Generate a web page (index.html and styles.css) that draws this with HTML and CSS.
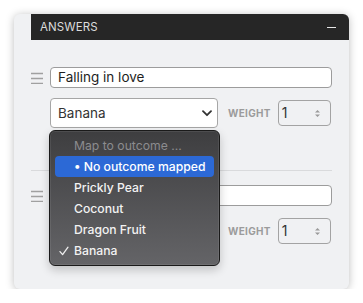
FILE: index.html
```html
<!DOCTYPE html>
<html>
<head>
<meta charset="utf-8">
<link rel="stylesheet" href="styles.css">
</head>
<body>
<div class="card">
  <div class="header">
    <span class="title">ANSWERS</span>
    <span class="collapse"></span>
  </div>
  <div class="body">
    <div class="answer">
      <div class="line">
        <svg class="handle" width="12" height="12" viewBox="0 0 12 12"><path d="M0 1.5H12M0 6.5H12M0 11.5H12" stroke="#a0a0a0" stroke-width="1.3"/></svg>
        <div class="text-input">Falling in love</div>
      </div>
      <div class="line sub">
        <div class="select-wrap">
          <div class="select">Banana</div>
          <svg class="chev" width="10" height="7" viewBox="0 0 10 7"><path d="M1 1.2L5 5.2L9 1.2" fill="none" stroke="#333" stroke-width="1.8" stroke-linecap="round" stroke-linejoin="round"/></svg>
          <div class="menu">
            <div class="item muted">Map to outcome ...</div>
            <div class="item active">• No outcome mapped</div>
            <div class="item">Prickly Pear</div>
            <div class="item">Coconut</div>
            <div class="item">Dragon Fruit</div>
            <div class="item checked"><svg class="check" width="10" height="10" viewBox="0 0 10 10"><path d="M1 5.6L3.6 8.6L9 1.2" fill="none" stroke="#eee" stroke-width="1.3" stroke-linecap="round" stroke-linejoin="round"/></svg>Banana</div>
          </div>
        </div>
        <span class="weight-label">WEIGHT</span>
        <div class="number">1<svg class="spin" width="7" height="9" viewBox="0 0 7 9"><path d="M1 3.5L3.5 1L6 3.5Z M1 5.5L3.5 8L6 5.5Z" fill="#9a9a9a"/></svg></div>
      </div>
    </div>
    <div class="answer second">
      <div class="line">
        <svg class="handle" width="12" height="12" viewBox="0 0 12 12"><path d="M0 1.5H12M0 6.5H12M0 11.5H12" stroke="#a0a0a0" stroke-width="1.3"/></svg>
        <div class="text-input"></div>
      </div>
      <div class="line sub">
        <div class="select-wrap">
          <div class="select"></div>
        </div>
        <span class="weight-label">WEIGHT</span>
        <div class="number">1<svg class="spin" width="7" height="9" viewBox="0 0 7 9"><path d="M1 3.5L3.5 1L6 3.5Z M1 5.5L3.5 8L6 5.5Z" fill="#9a9a9a"/></svg></div>
      </div>
    </div>
  </div>
</div>
</body>
</html>
```
FILE: styles.css
```css
* { box-sizing: border-box; }
html, body { margin: 0; padding: 0; background: #ffffff; }
body { font-family: Inter, "Noto Sans", sans-serif; }

.card {
  margin: 14px 0 0 14px;
  width: 335px;
  height: 275px;
  background: #f0f1f3;
  border-radius: 6px;
  box-shadow: 0 1px 8px rgba(0,0,0,0.26);
  padding-left: 17px;
}
.header {
  height: 26px;
  background: #262626;
  border-top-right-radius: 6px;
  display: flex;
  align-items: center;
  justify-content: space-between;
  padding: 0 13px 0 9px;
}
.title {
  color: #dcdcdc;
  font-size: 11.5px;
  letter-spacing: 0.1px;
}
.collapse {
  width: 9px;
  height: 1.5px;
  background: #e6e6e6;
  margin-top: 1px;
}
.body {
  padding: 27px 17px 0 0;
}
.answer {
  display: flex;
  flex-direction: column;
  gap: 10px;
  padding-bottom: 42px;
}
.answer.second {
  border-top: 1px solid #d9dadc;
  padding-top: 14px;
}
.line {
  display: flex;
  align-items: center;
}
.handle { width: 12px; height: 12px; margin-right: 7px; flex: none; }
.text-input {
  flex: 1;
  height: 21px;
  background: #fff;
  border: 1px solid #9c9c9c;
  border-radius: 4px;
  font-size: 13.5px;
  color: #1e1e1e;
  padding: 0 7px;
  line-height: 19px;
}
.sub { padding-left: 19px; }
.select-wrap {
  position: relative;
  width: 168px;
  height: 30px;
}
.select {
  height: 30px;
  background: #fff;
  border: 1px solid #a6a6a6;
  border-radius: 4px;
  font-size: 13.5px;
  color: #333;
  padding: 0 7px;
  line-height: 28px;
}
.chev { position: absolute; right: 6px; top: 12px; }
.weight-label {
  margin-left: 10px;
  font-size: 10px;
  font-weight: 700;
  color: #9b9b9b;
  letter-spacing: 0.3px;
}
.number {
  margin-left: 7px;
  width: 53px;
  height: 26px;
  border: 1px solid #a3a3a3;
  border-radius: 4px;
  font-size: 14px;
  color: #333;
  padding-left: 3px;
  line-height: 24px;
  display: flex;
  justify-content: space-between;
  align-items: center;
  padding-right: 9px;
}
.spin { width: 7px; height: 9px; }

.menu {
  position: absolute;
  left: -1px;
  top: 32px;
  width: 171px;
  height: 136px;
  border-radius: 6px;
  border: 1px solid #1a1a1a;
  background: linear-gradient(#3e3e40, #646467);
  box-shadow: inset 0 0 0 1px rgba(255,255,255,0.08), 0 4px 10px rgba(0,0,0,0.2);
  padding: 4px 5px 0 5px;
  z-index: 5;
}
.item {
  height: 21px;
  line-height: 21px;
  font-family: Inter, "Noto Sans", sans-serif;
  font-size: 12.2px;
  font-weight: 500;
  color: #f2f2f2;
  padding-left: 19px;
  border-radius: 4px;
  position: relative;
  white-space: nowrap;
}
.item.muted { color: #8c8c8f; font-weight: 400; }
.item.active { background: #2c69d6; color: #fff; }
.check { position: absolute; left: 4px; top: 6px; }
```
